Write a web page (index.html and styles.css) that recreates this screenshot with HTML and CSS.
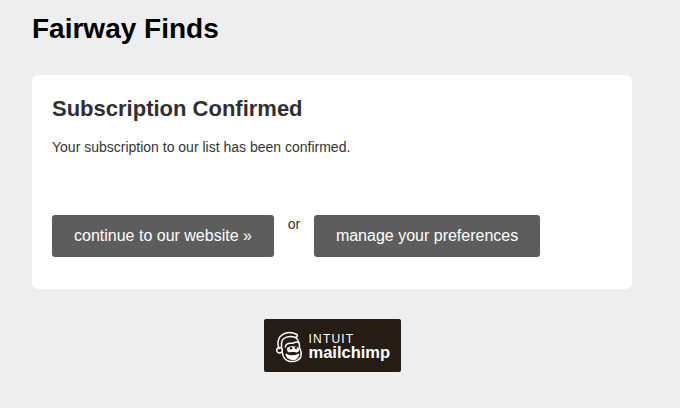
FILE: index.html
```html
<!DOCTYPE html>
<html lang="en">
<head>
<meta charset="utf-8">
<title>Fairway Finds</title>
<link rel="stylesheet" href="styles.css">
</head>
<body>
<div class="wrap">
  <h1 class="brand">Fairway Finds</h1>
  <main class="card">
    <h2 class="title">Subscription Confirmed</h2>
    <p class="message">Your subscription to our list has been confirmed.</p>
    <div class="actions">
      <a class="btn" href="#">continue to our website »</a>
      <span class="or">or</span>
      <a class="btn" href="#">manage your preferences</a>
    </div>
  </main>
  <div class="footer">
    <a class="badge" href="#">
      <svg class="chimp" width="28" height="32" viewBox="0 0 34 38" fill="none" stroke="#fff" stroke-width="1.8" stroke-linecap="round" stroke-linejoin="round">
        <path d="M5 21C2 15 4 7 9 4C14 .8 21 1 26 3.500C28 4.500 27 7 25 7.500C27 9 28.500 11 29 13.500"/>
        <path d="M8 19C7 13 9 8.500 14 7C18 5.800 22 6.500 25 7.500"/>
        <circle cx="5.500" cy="23" r="3.400"/>
        <path d="M9 26C9.500 31 12 35.500 18 36.500C24 37.500 30.500 35 31.500 30C32.300 26 31 22 29.500 19.500C30.500 15.500 29 13 26.500 13C23.500 13 22 15 19.500 14.500C16.500 14 13 15.500 12.500 19"/>
        <path d="M13.500 28C17 30.500 24 31 28.500 28C27.500 33 24 34.500 20.500 34C17 33.500 14.500 31.500 13.500 28Z" fill="#fff"/>
        <path d="M15 20C17 17.500 28 17 29 21C30 24 27.500 26 25 25.500C23 25 20 25 18 25.500C15.500 26 14 23 15 20Z" fill="#fff" stroke="none"/>
        <circle cx="19.500" cy="20.500" r="1.500" fill="#241c15" stroke="none"/>
        <circle cx="25.500" cy="20" r="1.500" fill="#241c15" stroke="none"/>
      </svg>
      <span class="wordmark">
        <span class="intuit">INTUIT</span>
        <span class="mailchimp">mailchimp</span>
      </span>
    </a>
  </div>
</div>
</body>
</html>
```
FILE: styles.css
```css
* {
  box-sizing: border-box;
}

html,
body {
  margin: 0;
  padding: 0;
}

body {
  background: #eeeeee;
  font-family: "Liberation Sans", Arial, sans-serif;
  color: #333333;
}

.wrap {
  width: 600px;
  margin-left: 32px;
}

.brand {
  margin: 0;
  padding-top: 13px;
  height: 75px;
  font-size: 28px;
  line-height: 32px;
  font-weight: 700;
  color: #000000;
}

.card {
  height: 214px;
  padding: 20px;
  background: #ffffff;
  border-radius: 6px;
}

.title {
  margin: 0;
  font-size: 22px;
  line-height: 27px;
  font-weight: 700;
  color: #2f2f33;
}

.message {
  margin: 17px 0 0;
  font-size: 14px;
  line-height: 16px;
}

.actions {
  display: flex;
  align-items: flex-start;
  margin-top: 60px;
}

.btn {
  display: flex;
  align-items: center;
  height: 42px;
  padding: 0 22px;
  background: #5d5d5d;
  border-radius: 3px;
  color: #ffffff;
  font-size: 16px;
  text-decoration: none;
}

.or {
  width: 40px;
  padding-top: 1px;
  font-size: 14px;
  line-height: 16px;
  text-align: center;
}

.footer {
  display: flex;
  justify-content: center;
  padding-top: 30px;
}

.badge {
  display: flex;
  align-items: center;
  width: 137px;
  height: 53px;
  padding-left: 11px;
  padding-top: 2px;
  gap: 6px;
  background: #241c15;
  border-radius: 2px;
  color: #ffffff;
  text-decoration: none;
}

.chimp {
  flex: none;
}

.wordmark {
  display: flex;
  flex-direction: column;
}

.intuit {
  font-size: 12px;
  line-height: 12px;
  font-weight: 400;
  letter-spacing: 1.2px;
}

.mailchimp {
  font-size: 16.5px;
  line-height: 15px;
  font-weight: 700;
}
```
